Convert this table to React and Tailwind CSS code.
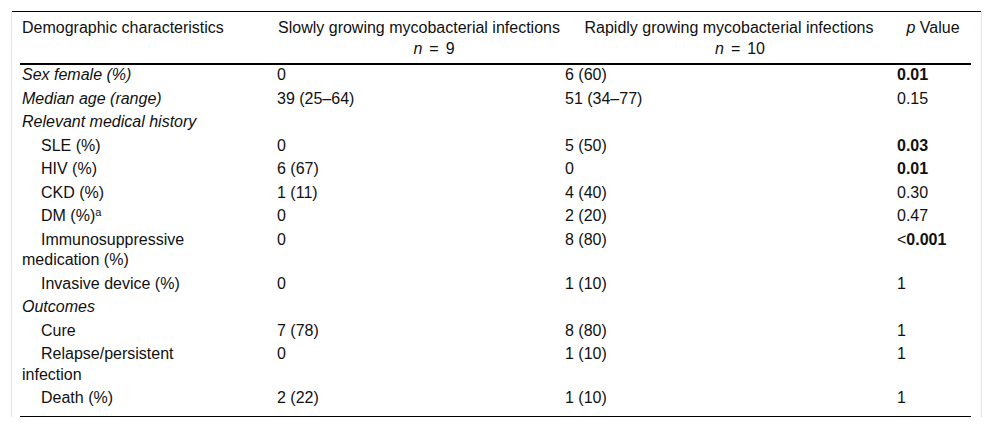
const rows = [
  { label: "Sex female (%)", italic: true, slow: "0", rapid: "6 (60)", p: "0.01", bold: true },
  { label: "Median age (range)", italic: true, slow: "39 (25–64)", rapid: "51 (34–77)", p: "0.15" },
  { label: "Relevant medical history", italic: true, slow: "", rapid: "", p: "" },
  { label: "SLE (%)", indent: true, slow: "0", rapid: "5 (50)", p: "0.03", bold: true },
  { label: "HIV (%)", indent: true, slow: "6 (67)", rapid: "0", p: "0.01", bold: true },
  { label: "CKD (%)", indent: true, slow: "1 (11)", rapid: "4 (40)", p: "0.30" },
  { label: "DM (%)", sup: "a", indent: true, slow: "0", rapid: "2 (20)", p: "0.47" },
  { label: "Immunosuppressive medication (%)", indent: true, slow: "0", rapid: "8 (80)", p: "0.001", lt: true, bold: true },
  { label: "Invasive device (%)", indent: true, slow: "0", rapid: "1 (10)", p: "1" },
  { label: "Outcomes", italic: true, slow: "", rapid: "", p: "" },
  { label: "Cure", indent: true, slow: "7 (78)", rapid: "8 (80)", p: "1" },
  { label: "Relapse/persistent infection", indent: true, slow: "0", rapid: "1 (10)", p: "1" },
  { label: "Death (%)", indent: true, slow: "2 (22)", rapid: "1 (10)", p: "1" },
];

export default function App() {
  return (
    <div className="min-h-[428px] bg-white pt-[11px] text-[16px] leading-[20.5px] text-[#111]" style={{ fontFamily: '"Liberation Sans", Arial, sans-serif' }}>
      <div className="ml-[11px] w-[971px] border-x border-[#e4e4e4]">
        <div className="border-t border-black pl-[8px] pr-[10px]">
          {/* header */}
          <div className="grid grid-cols-[255px_288px_332px_1fr] border-b-2 border-black pt-[6px] pb-[4px]">
            <div className="pl-[2px] pr-[45px] whitespace-nowrap">Demographic characteristics</div>
            <div className="px-[2px] text-center whitespace-nowrap">
              <div>Slowly growing mycobacterial infections</div>
              <div className="pl-[30px]">
                <i>n</i>
                <span className="mx-[7px]">=</span>9
              </div>
            </div>
            <div className="px-[2px] text-center whitespace-nowrap">
              <div>Rapidly growing mycobacterial infections</div>
              <div className="pl-[22px]">
                <i>n</i>
                <span className="mx-[7px]">=</span>10
              </div>
            </div>
            <div className="px-[2px] text-center">
              <i>p</i> Value
            </div>
          </div>

          {/* body */}
          <div className="border-b border-black pb-[4px]">
            {rows.map((row, index) => (
              <div key={index} className="grid grid-cols-[255px_288px_332px_1fr] pb-[3px]">
                <div className={`pl-[2px] pr-[45px] ${row.italic ? "italic" : ""} ${row.indent ? "indent-[19px]" : ""}`}>
                  {row.label}
                  {row.sup && <sup className="text-[11px]">{row.sup}</sup>}
                </div>
                <div className="px-[2px]">{row.slow}</div>
                <div className="px-[2px]">{row.rapid}</div>
                <div className="px-[2px]">
                  {row.lt && <span>&lt;</span>}
                  <span className={row.bold ? "font-bold" : ""}>{row.p}</span>
                </div>
              </div>
            ))}
          </div>
        </div>
      </div>
    </div>
  );
}
